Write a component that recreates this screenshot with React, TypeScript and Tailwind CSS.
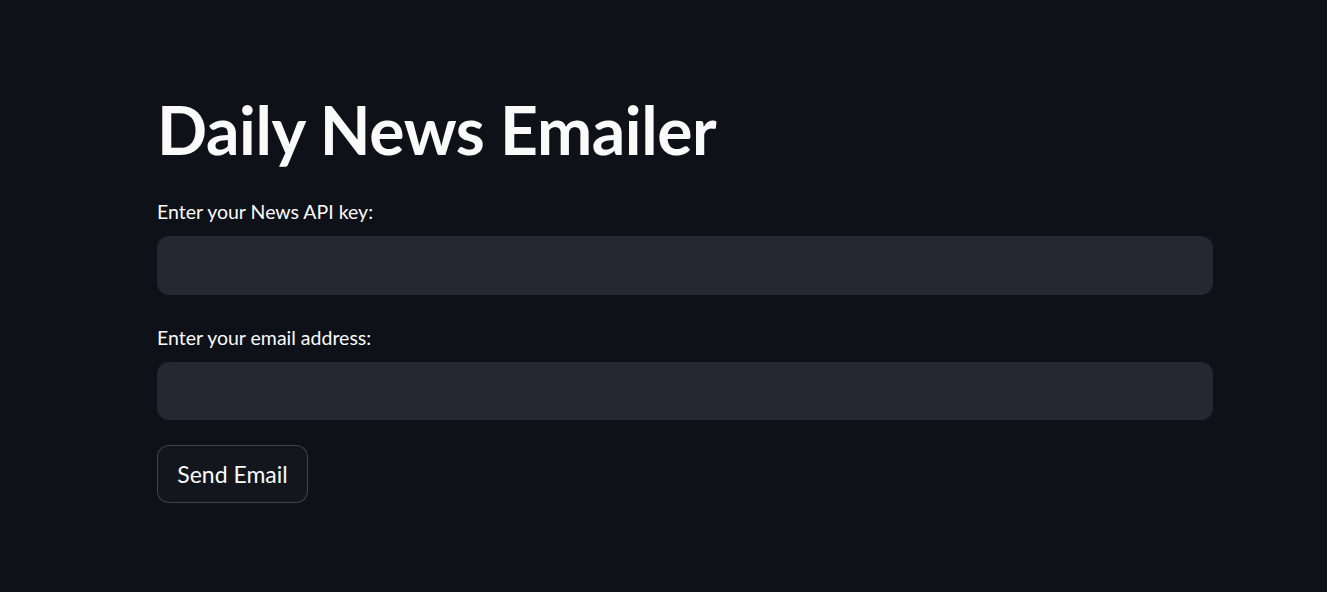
export default function App() {
  const font = { fontFamily: '"Lato", "Noto Sans", sans-serif' };
  return (
    <div className="min-h-[592px] w-full bg-[#0e1117] text-[#fafafa]" style={font}>
      <div className="ml-[157px] w-[1056px] pt-[90px]">
        <h1 className="h-[80px] text-[66px] font-bold leading-[80px] tracking-[-0.4px]">Daily News Emailer</h1>
        <div className="mt-[30px] flex flex-col">
          <label className="h-[36px] text-[19.5px] leading-[24px]">Enter your News API key:</label>
          <div className="h-[59px] rounded-[12px] bg-[#262730]" />
        </div>
        <div className="mt-[31px] flex flex-col">
          <label className="h-[36px] text-[19.5px] leading-[24px]">Enter your email address:</label>
          <div className="h-[58px] rounded-[12px] bg-[#262730]" />
        </div>
        <button className="mt-[25px] flex h-[58px] w-[151px] items-center justify-center rounded-[12px] border border-[rgba(250,250,250,0.2)] bg-[#13161d] text-[23px]">
          Send Email
        </button>
      </div>
    </div>
  );
}
